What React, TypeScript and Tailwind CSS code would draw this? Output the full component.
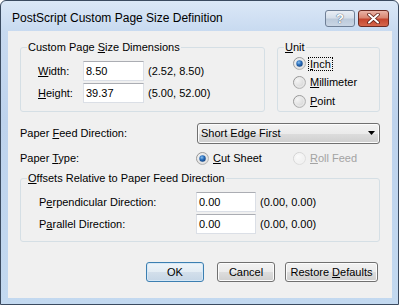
import { useId } from "react"

// Win7-style "PostScript Custom Page Size Definition" dialog

function Radio({ checked = false, disabled = false }: { checked?: boolean; disabled?: boolean }) {
  const id = useId().replace(/:/g, "")
  return (
    <svg width="13" height="13" viewBox="0 0 13 13" className="shrink-0">
      <defs>
        <linearGradient id={id + "r"} x1="0" y1="0" x2="1" y2="1">
          <stop offset="0" stopColor={disabled ? "#cfcfcf" : "#8a8a8a"} />
          <stop offset="1" stopColor={disabled ? "#e2e2e2" : "#c4c4c4"} />
        </linearGradient>
        <radialGradient id={id + "f"} cx="0.3" cy="0.3" r="0.8">
          <stop offset="0" stopColor={disabled ? "#fbfbfb" : "#f6f6f6"} />
          <stop offset="1" stopColor={disabled ? "#ededed" : "#d2d2d2"} />
        </radialGradient>
        <radialGradient id={id + "d"} cx="0.4" cy="0.35" r="0.75">
          <stop offset="0" stopColor="#8cc3f0" />
          <stop offset="0.45" stopColor="#2b6fbc" />
          <stop offset="1" stopColor="#0c3b7a" />
        </radialGradient>
      </defs>
      <circle cx="6.5" cy="6.5" r="6" fill={`url(#${id}f)`} stroke={`url(#${id}r)`} strokeWidth="1" />
      <circle cx="6.5" cy="6.5" r="4.5" fill="none" stroke={disabled ? "#f4f4f4" : "#ececec"} strokeWidth="1" />
      {checked && <circle cx="6.5" cy="6.5" r="3.2" fill={`url(#${id}d)`} />}
    </svg>
  )
}

function Group({
  label,
  className,
  bodyClassName,
  children,
}: {
  label: React.ReactNode
  className?: string
  bodyClassName?: string
  children: React.ReactNode
}) {
  return (
    <fieldset className={"min-w-0 rounded-[3px] border border-[#d5dfe5] " + (className ?? "")}>
      <legend className="ml-[6px] px-[1px] leading-[14px]">{label}</legend>
      <div className={bodyClassName}>{children}</div>
    </fieldset>
  )
}

function TextBox({ value, className }: { value: string; className?: string }) {
  return (
    <div
      className={
        "flex h-[20px] items-center border border-[#dbdfe6] border-t-[#abadb3] bg-white pl-[2px] leading-[14px] " +
        (className ?? "")
      }
    >
      {value}
    </div>
  )
}

function Button({ children, className, isDefault }: { children: React.ReactNode; className?: string; isDefault?: boolean }) {
  return (
    <div
      className={[
        "flex h-[20px] items-center justify-center rounded-[3px] border leading-[14px]",
        isDefault
          ? "border-[#3c7fb1] bg-[linear-gradient(#eef4f9_0%,#e3ecf4_50%,#d3dfeb_51%,#c6d6e6_100%)] shadow-[inset_0_0_0_1px_#d6e8f6]"
          : "border-[#707070] bg-[linear-gradient(#f2f2f2_0%,#ebebeb_50%,#dddddd_51%,#cfcfcf_100%)] shadow-[inset_0_0_0_1px_#fcfcfc]",
        className ?? "",
      ].join(" ")}
    >
      <span>{children}</span>
    </div>
  )
}

export default function App() {
  return (
    <div className="h-[305px] w-[399px] overflow-hidden bg-white">
      <div className="flex h-[305px] w-[399px] flex-col rounded-t-[6px] border border-[#3b4b60] bg-[linear-gradient(#dbe8f7_0px,#c8daf0_30px,#bed3ed_120px,#c3d9f0_100%)] font-['Liberation_Sans',Arial,sans-serif] text-[11px] text-black">
        {/* title bar */}
        <div className="flex h-[30px] shrink-0 items-start pl-[11px] pr-[9px] pt-[9px]">
          <div className="flex-1 text-[12px] leading-[16px]">PostScript Custom Page Size Definition</div>
          <div className="flex gap-[3px]">
            <div className="flex h-[17px] w-[30px] items-center justify-center rounded-[3px] border border-[#6f7f96] bg-[linear-gradient(#e9eef5_0%,#d6dfea_45%,#bccadb_55%,#cad6e5_100%)] text-[13px] font-bold leading-[15px] text-white [text-shadow:0_0_1px_#42556f,0_0_1px_#42556f]">
              ?
            </div>
            <div className="flex h-[17px] w-[31px] items-center justify-center rounded-[3px] border border-[#6b2a22] bg-[linear-gradient(#eab3a6_0%,#d98672_45%,#c5452e_55%,#d5674c_100%)]">
              <svg width="13" height="11" viewBox="0 0 13 11">
                <path d="M2 1.5 L11 9.5 M11 1.5 L2 9.5" stroke="#5c1d14" strokeWidth="3.6" strokeLinecap="round" />
                <path d="M2 1.5 L11 9.5 M11 1.5 L2 9.5" stroke="#ffffff" strokeWidth="2" strokeLinecap="round" />
              </svg>
            </div>
          </div>
        </div>

        {/* client area */}
        <div className="mb-[6px] ml-[7px] mr-[6px] flex flex-1 flex-col bg-[#f0f0f0] px-[12px] pt-[9px]">
          <div className="flex gap-[12px]">
            <Group
              className="w-[245px]"
              bodyClassName="flex flex-col gap-[2px] pb-[7px] pl-[17px] pt-[7px]"
              label={
                <>
                  Custom Page <u>S</u>ize Dimensions
                </>
              }
            >
              <div className="flex h-[20px] items-center">
                <span className="w-[45px]">
                  <u>W</u>idth:
                </span>
                <TextBox value="8.50" className="w-[61px]" />
                <span className="ml-[4px]">(2.52, 8.50)</span>
              </div>
              <div className="flex h-[20px] items-center">
                <span className="w-[45px]">
                  <u>H</u>eight:
                </span>
                <TextBox value="39.37" className="w-[61px]" />
                <span className="ml-[4px]">(5.00, 52.00)</span>
              </div>
            </Group>

            <Group
              className="flex-1"
              bodyClassName="flex flex-col pl-[15px]"
              label={
                <>
                  <u>U</u>nit
                </>
              }
            >
              <div className="flex h-[19px] items-center gap-[3px]">
                <Radio checked />
                <span className="px-[1px] leading-[12px] outline outline-1 outline-dotted outline-black">
                  <u>I</u>nch
                </span>
              </div>
              <div className="flex h-[19px] items-center gap-[4px]">
                <Radio />
                <span>
                  <u>M</u>illimeter
                </span>
              </div>
              <div className="flex h-[19px] items-center gap-[4px]">
                <Radio />
                <span>
                  <u>P</u>oint
                </span>
              </div>
            </Group>
          </div>

          {/* paper feed direction */}
          <div className="mt-[11px] flex h-[20px] items-center">
            <span className="w-[177px]">
              Paper <u>F</u>eed Direction:
            </span>
            <div className="flex h-[21px] flex-1 items-center justify-between rounded-[3px] border border-[#707070] bg-[linear-gradient(#f2f2f2_0%,#ebebeb_50%,#dddddd_51%,#cfcfcf_100%)] pl-[3px] pr-[4px] shadow-[inset_0_0_0_1px_#fcfcfc]">
              <span>Short Edge First</span>
              <svg width="7" height="4" viewBox="0 0 7 4">
                <path d="M0 0 H7 L3.5 4 Z" fill="#000" />
              </svg>
            </div>
          </div>

          {/* paper type */}
          <div className="mt-[5px] flex h-[20px] items-center">
            <span className="w-[176px]">
              Paper <u>T</u>ype:
            </span>
            <div className="flex w-[97px] items-center gap-[4px]">
              <Radio checked />
              <span>
                <u>C</u>ut Sheet
              </span>
            </div>
            <div className="flex items-center gap-[4px] text-[#a3a3a3]">
              <Radio disabled />
              <span>
                <u>R</u>oll Feed
              </span>
            </div>
          </div>

          {/* offsets */}
          <Group
            className="mt-[3px]"
            bodyClassName="flex flex-col gap-[2px] pb-[7px] pl-[18px] pt-[7px]"
            label={
              <>
                <u>O</u>ffsets Relative to Paper Feed Direction
              </>
            }
          >
            <div className="flex h-[20px] items-center">
              <span className="w-[157px]">
                P<u>e</u>rpendicular Direction:
              </span>
              <TextBox value="0.00" className="w-[60px]" />
              <span className="ml-[4px]">(0.00, 0.00)</span>
            </div>
            <div className="flex h-[20px] items-center">
              <span className="w-[157px]">
                P<u>a</u>rallel Direction:
              </span>
              <TextBox value="0.00" className="w-[60px]" />
              <span className="ml-[4px]">(0.00, 0.00)</span>
            </div>
          </Group>

          {/* buttons */}
          <div className="mt-[20px] flex justify-end pr-[2px]">
            <Button isDefault className="w-[58px]">OK</Button>
            <Button className="ml-[13px] w-[58px]">Cancel</Button>
            <Button className="ml-[10px] w-[93px]">
              Restore <u>D</u>efaults
            </Button>
          </div>
        </div>
      </div>
    </div>
  )
}
